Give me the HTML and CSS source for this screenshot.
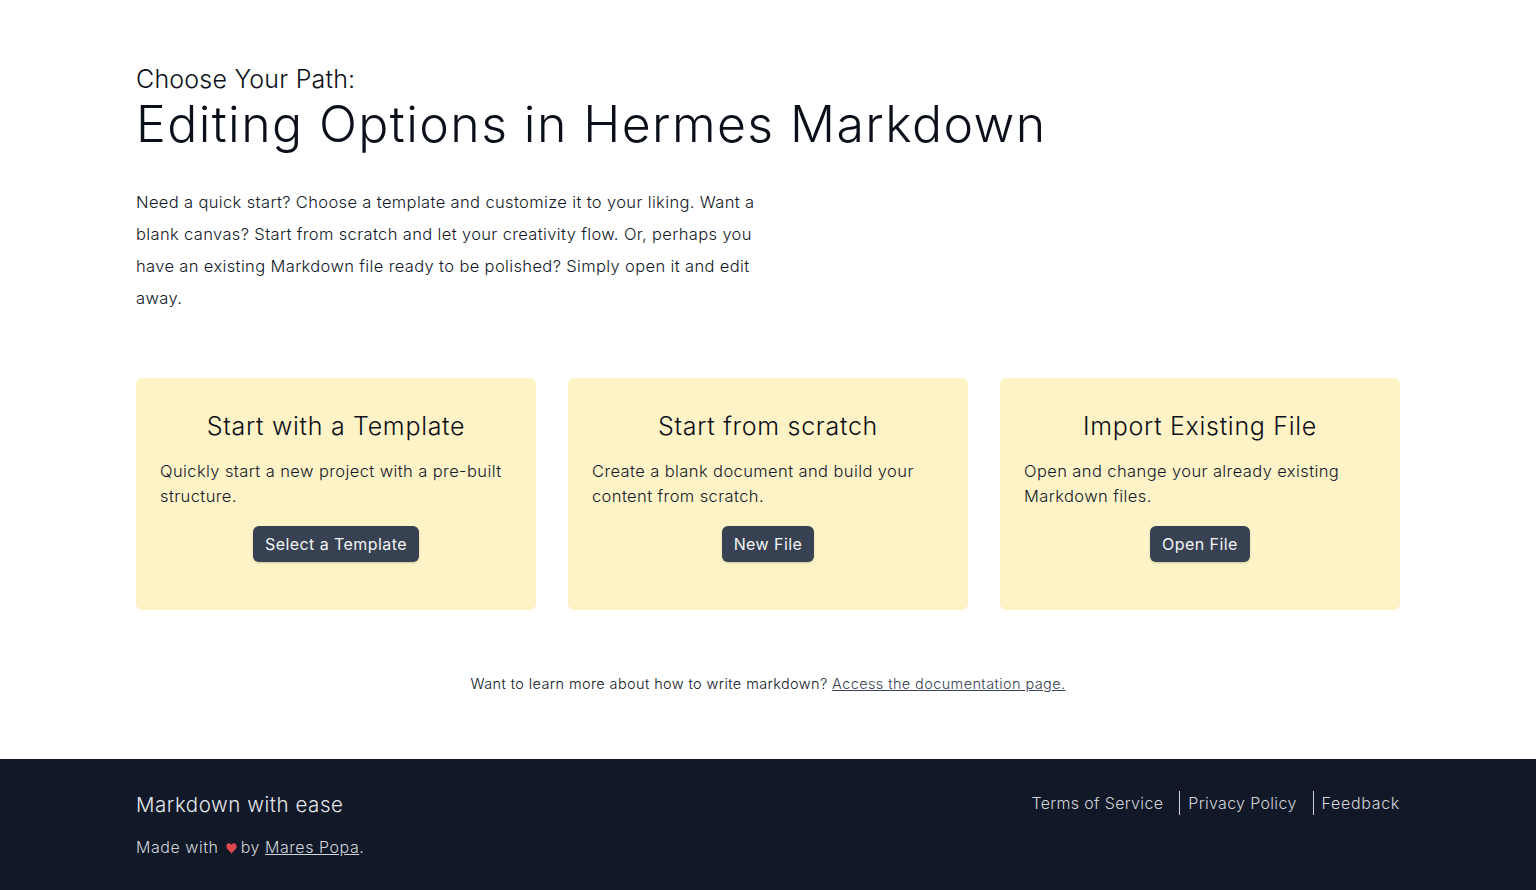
FILE: index.html
```html
<!DOCTYPE html>
<html lang="en">
<head>
<meta charset="utf-8">
<title>Hermes Markdown</title>
<link rel="stylesheet" href="styles.css">
</head>
<body>
<main class="main">
  <header class="intro">
    <p class="eyebrow">Choose Your Path:</p>
    <h1 class="title">Editing Options in Hermes Markdown</h1>
    <p class="lead">Need a quick start? Choose a template and customize it to your liking. Want a<br>blank canvas? Start from scratch and let your creativity flow. Or, perhaps you<br>have an existing Markdown file ready to be polished? Simply open it and edit<br>away.</p>
  </header>
  <section class="cards">
    <article class="card">
      <h2 class="card-title">Start with a Template</h2>
      <p class="card-text">Quickly start a new project with a pre-built structure.</p>
      <button class="btn">Select a Template</button>
    </article>
    <article class="card">
      <h2 class="card-title">Start from scratch</h2>
      <p class="card-text">Create a blank document and build your content from scratch.</p>
      <button class="btn">New File</button>
    </article>
    <article class="card">
      <h2 class="card-title">Import Existing File</h2>
      <p class="card-text">Open and change your already existing Markdown files.</p>
      <button class="btn">Open File</button>
    </article>
  </section>
  <p class="docs">Want to learn more about how to write markdown? <a class="docs-link" href="#">Access the documentation page.</a></p>
</main>
<footer class="footer">
  <div class="footer-left">
    <p class="tagline">Markdown with ease</p>
    <p class="made">Made with <svg class="heart" viewBox="0 0 12 12" aria-hidden="true"><path d="M6 11.6C4.6 9.6 .4 6.9 .4 3.6 .4 1.7 1.8.4 3.3.4 4.5.4 5.5 1.1 6 2.2 6.5 1.1 7.5.4 8.7.4 10.2.4 11.6 1.7 11.6 3.6 11.6 6.9 7.4 9.6 6 11.6Z"/></svg> by <a class="made-link" href="#">Mares Popa</a>.</p>
  </div>
  <nav class="footer-nav">
    <a class="nav-link" href="#">Terms of Service</a>
    <a class="nav-link" href="#">Privacy Policy</a>
    <a class="nav-link nav-link-wide" href="#">Feedback</a>
  </nav>
</footer>
</body>
</html>
```
FILE: styles.css
```css
* { box-sizing: border-box; margin: 0; padding: 0; }
body {
  font-family: "Inter", "Open Sans", sans-serif;
  color: #111827;
  background: #fff;
  font-weight: 400;
}
.main { padding: 64px 136px 65px; }
.eyebrow { font-size: 25px; line-height: 30px; font-weight: 300; letter-spacing: 0.2px; color: #0b0f19; }
.title { font-size: 50px; line-height: 60px; font-weight: 300; letter-spacing: 1.41px; color: #0b0f19; }
.lead { margin-top: 32px; font-size: 16.5px; line-height: 32px; font-weight: 300; letter-spacing: 0.36px; white-space: nowrap; }
.cards { display: grid; grid-template-columns: repeat(3, 400px); justify-content: space-between; margin-top: 64px; }
.card { background: #fef3c7; border-radius: 6px; padding: 32px 24px 48px; display: flex; flex-direction: column; }
.card-title { font-size: 25px; line-height: 32px; font-weight: 300; text-align: center; letter-spacing: 0.7px; color: #0b0f19; }
.card-text { margin-top: 17px; font-size: 16.5px; line-height: 25px; font-weight: 300; letter-spacing: 0.4px; }
.btn { align-self: center; margin-top: 17px; height: 36px; padding: 0 12px; font: inherit; font-size: 16px; letter-spacing: 0.44px; color: #f3f4f6; background: #374151; border: 0; border-radius: 6px; box-shadow: 0 1px 2px rgba(0,0,0,.2); }
.docs { margin-top: 64px; text-align: center; font-size: 14.5px; line-height: 20px; font-weight: 300; letter-spacing: 0.39px; }
.docs-link { color: #374151; text-decoration: underline; }
.footer { background: #111827; color: #d1d5db; display: flex; justify-content: space-between; padding: 32px 136px 31px; height: 131px; }
.tagline { font-size: 20.5px; line-height: 28px; font-weight: 300; color: #e5e7eb; letter-spacing: 0.55px; }
.made { margin-top: 16px; font-size: 16px; line-height: 24px; font-weight: 300; letter-spacing: 0.55px; }
.heart { width: 11px; height: 11px; margin: 0 -1px 0 2px; fill: #e0474c; vertical-align: -1px; }
.made-link { color: inherit; text-decoration: underline; }
.footer-nav { display: flex; align-items: flex-start; }
.nav-link { color: #d1d5db; text-decoration: none; font-size: 16px; line-height: 24px; font-weight: 300; letter-spacing: 0.33px; padding: 0 16px 0 8px; border-right: 1px solid #d1d5db; }
.nav-link:last-child { padding-right: 0; border-right: 0; }
.nav-link-wide { letter-spacing: 0.68px; }
```
